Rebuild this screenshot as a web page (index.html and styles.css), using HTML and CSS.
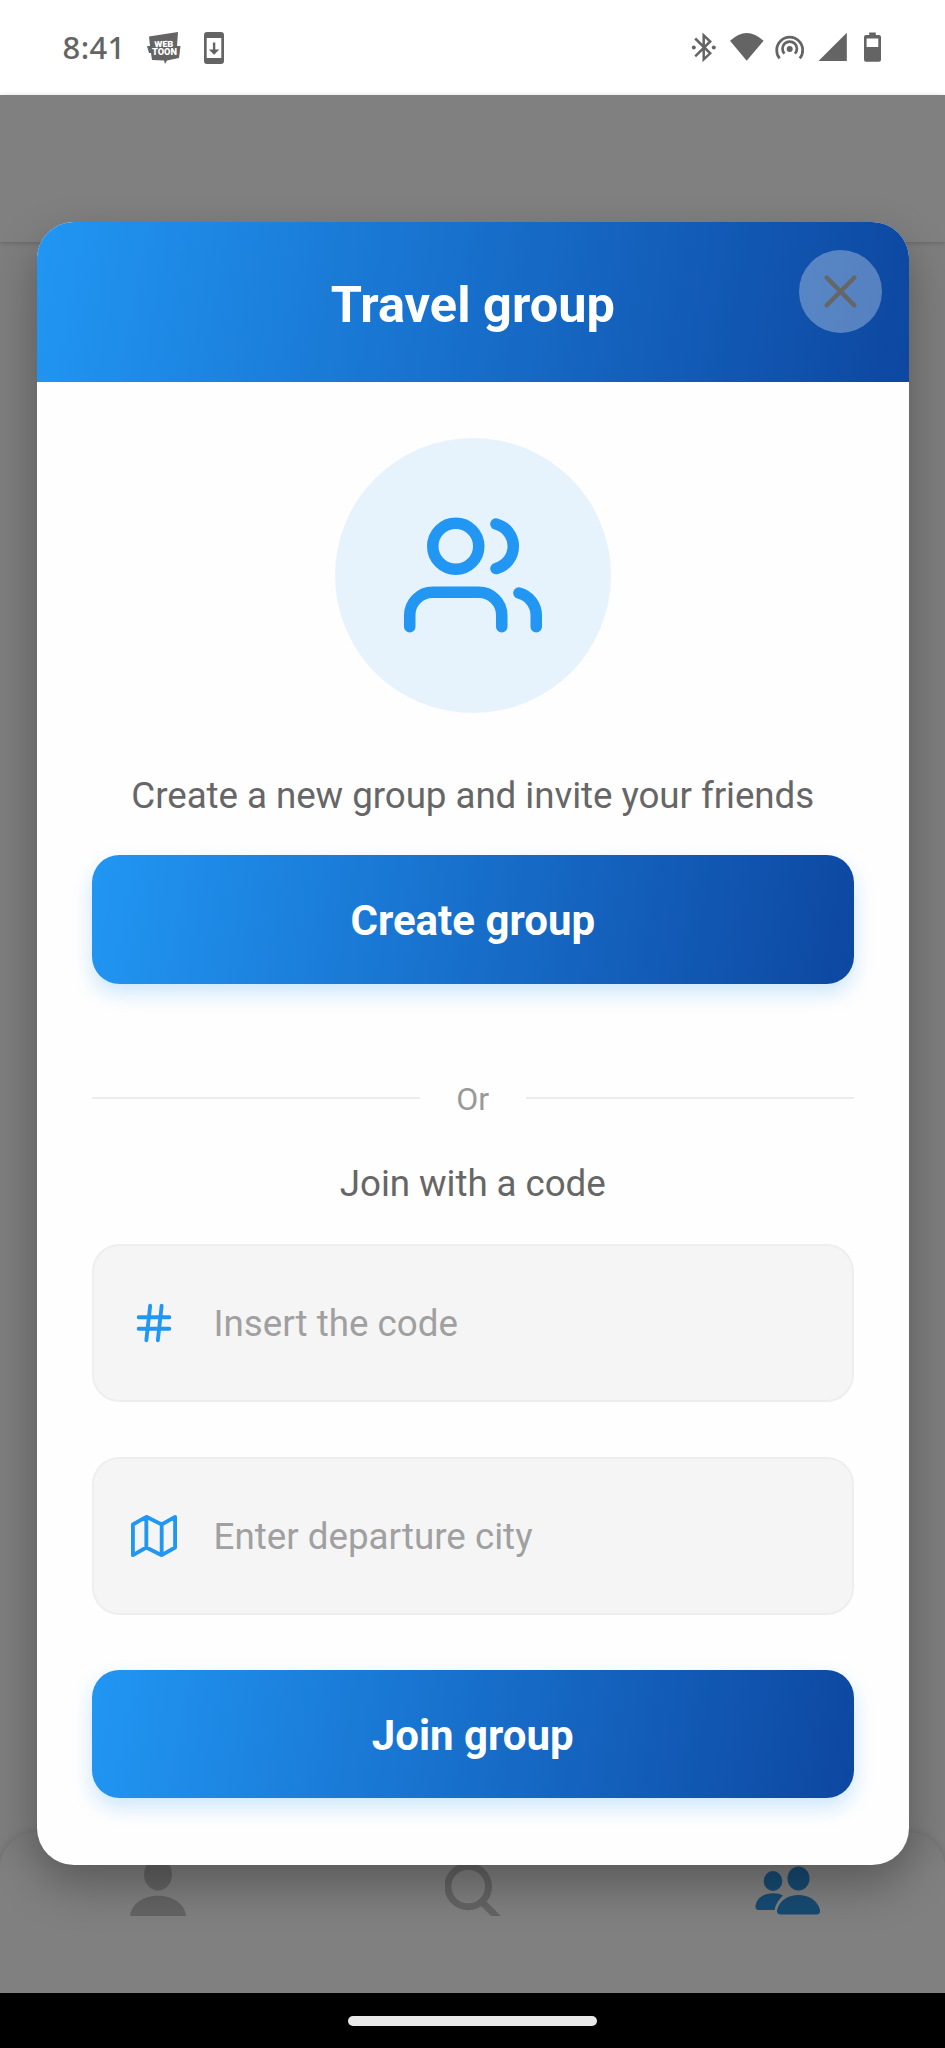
FILE: index.html
```html
<!DOCTYPE html>
<html lang="en">
<head>
<meta charset="utf-8">
<title>Travel group</title>
<link rel="stylesheet" href="styles.css">
</head>
<body>
<div class="phone">
  <header class="status">
    <div class="status-left">
      <span class="clock">8:41</span>
      <svg class="ic-webtoon" width="34" height="33" viewBox="0 0 34 33">
        <path fill="#646464" d="M2 4.500L31 0L30 14H33.500L32 26L20 28.500L18 32L17 28.500L5 28L4 21H2L0 14H3Z"/>
        <text x="17" y="15" class="toon" text-anchor="middle" textLength="19" lengthAdjust="spacingAndGlyphs" transform="rotate(-2 17 15)">WEB</text>
        <text x="17.500" y="23" class="toon" text-anchor="middle" textLength="25" lengthAdjust="spacingAndGlyphs">TOON</text>
      </svg>
      <svg class="ic-update" width="20" height="32" viewBox="0 0 20 32">
        <path fill="#646464" fill-rule="evenodd" d="M3 0H17Q20 0 20 3V29Q20 32 17 32H3Q0 32 0 29V3Q0 0 3 0ZM2.700 6V26H17.300V6Z"/>
        <path fill="#646464" d="M8.900 10.500H11.300V17.500H15.300L10.100 22.800L4.900 17.500H8.900Z"/>
      </svg>
    </div>
    <svg class="status-right" width="192" height="32" viewBox="0 0 192 32">
      <g fill="none" stroke="#646464" stroke-width="2.500">
        <path d="M4.200 6.500L19.200 21.300L12.700 27.400V3.400L19.200 9.500L4.200 24.300"/>
        <path d="M88.600 26.400A13 13 0 1 1 108.800 26.400" stroke-width="2.700"/>
        <path d="M93.400 21.600A7.200 7.200 0 1 1 104 21.600" stroke-width="2.700"/>
      </g>
      <g fill="#646464">
        <circle cx="2.800" cy="15.600" r="2"/><circle cx="22.800" cy="15.600" r="2"/>
        <path d="M39 8.800Q55.700-7 72.600 8.800L55.700 28.700Z"/>
        <circle cx="98.700" cy="17" r="3"/>
        <path d="M155.800.8V29H127.500Z"/>
        <path fill-rule="evenodd" d="M178.200.5H184.800V3H187.800Q190 3 190 5V27.700Q190 29.700 188 29.700H175Q173 29.700 173 27.700V5Q173 3 175 3H178.200ZM175.600 6.500V15H187.300V6.500Z"/>
      </g>
    </svg>
  </header>
  <main class="backdrop">
    <div class="app-bar"></div>
    <div class="app-body"></div>
    <nav class="tabs">
      <div class="tab-row">
      <svg width="56" height="60" viewBox="0 0 56 60"><g fill="#646464"><ellipse cx="28" cy="18.500" rx="14" ry="16"/><path d="M0 60C3 33 53 33 56 60Z"/></g></svg>
      <svg width="56" height="60" viewBox="0 0 56 60"><path d="M37.500 46.500L54 63M43.500 30.500A20.300 20.300 0 1 1 2.900 30.500A20.300 20.300 0 1 1 43.500 30.500" fill="none" stroke="#646464" stroke-width="7"/></svg>
      <svg width="66" height="60" viewBox="0 0 66 60"><g fill="#174b73"><ellipse cx="18" cy="25" rx="9.300" ry="10"/><ellipse cx="43.500" cy="22.500" rx="11" ry="12"/><path d="M3 54Q0 53.500.5 50C3 36 20 35.500 28 39.500Q21.500 45 19.500 54Z"/><path d="M25 58.500Q21.500 58 22 54C27 34 60 34 65 54Q65.500 58 62 58.500Z"/></g></svg>
      </div>
    </nav>
    <section class="modal">
      <div class="modal-head">
        <h1>Travel group</h1>
        <button class="close" aria-label="Close"><svg width="55" height="55" viewBox="0 0 24 24"><path d="M18 6L6 18M6 6l12 12"/></svg></button>
      </div>
      <div class="modal-body">
        <div class="hero"><svg width="138" height="138" viewBox="0 0 24 24"><path d="M17 21v-2a4 4 0 0 0-4-4H5a4 4 0 0 0-4 4v2"/><circle cx="9" cy="7" r="4"/><path d="M23 21v-2a4 4 0 0 0-3-3.870M16 3.130a4 4 0 0 1 0 7.750"/></svg></div>
        <p class="lead">Create a new group and invite your friends</p>
        <button class="action">Create group</button>
        <div class="divider"><span>Or</span></div>
        <p class="join">Join with a code</p>
        <label class="field"><svg width="46" height="46" viewBox="0 0 24 24"><path d="M4 9h16M4 15h16M10 3L8 21M16 3l-2 18"/></svg><span>Insert the code</span></label>
        <label class="field"><svg width="46" height="46" viewBox="0 0 24 24"><path d="M1 6v16l7-4 8 4 7-4V2l-7 4-8-4-7 4zM8 2v16M16 6v16"/></svg><span>Enter departure city</span></label>
        <button class="action last">Join group</button>
      </div>
    </section>
  </main>
  <footer class="gesture"><div class="pill"></div></footer>
</div>
</body>
</html>
```
FILE: styles.css
```css
* { box-sizing: border-box; }
body { margin: 0; font-family: Roboto, sans-serif; }
svg { display: block; flex: none; }
h1, p { margin: 0; }
button { border: 0; padding: 0; font-family: inherit; }
.phone { width: 945px; height: 2048px; display: flex; flex-direction: column; overflow: hidden; background: #fff; }
.status { height: 94.500px; flex: none; display: flex; justify-content: space-between; padding: 32px 62px 0 62.500px; }
.status-left { display: flex; }
.clock { width: 84.500px; font: 500 31px/31px "Noto Sans", sans-serif; color: #646464; letter-spacing: .4px; }
.toon { font: 900 8.500px Roboto, sans-serif; fill: #fff; }
.ic-update { margin-left: 23px; }
.status-right { margin-left: auto; }
.backdrop { position: relative; flex: 1; display: flex; flex-direction: column; background: #7e7e7e; }
.app-bar { height: 147px; flex: none; background: #808080; box-shadow: 0 1px 5px rgba(0,0,0,.2); }
.app-body { flex: 1; }
.tabs { height: 161px; background: linear-gradient(#7a7a7a, #808080 40px); border-radius: 37px 37px 0 0; box-shadow: 0 0 8px rgba(0,0,0,.15); }
.tab-row { padding: 24px 0 0; display: grid; grid-template-columns: repeat(3, 1fr); justify-items: center; }
.modal { position: absolute; left: 37px; top: 127.500px; width: 871.500px; height: 1642.500px; border-radius: 37px; background: #fefefe; overflow: hidden; box-shadow: 0 20px 46px rgba(0,0,0,.3); }
.modal-head { position: relative; height: 160px; display: flex; align-items: center; justify-content: center; background: linear-gradient(100.400deg, #2196f3, #0d47a1); }
.modal-head h1 { color: #fff; font-size: 50.500px; line-height: 60px; font-weight: 700; padding-top: 6px; }
.close { position: absolute; right: 27px; top: 27.500px; width: 83px; height: 83px; border-radius: 50%; background: rgba(255,255,255,.3); display: grid; place-items: center; }
.close svg { stroke: #666; stroke-width: 2; stroke-linecap: round; }
.modal-body { padding: 55.500px 55px 0; display: flex; flex-direction: column; }
.hero { align-self: center; width: 275.500px; height: 275.500px; border-radius: 50%; background: #e6f3fd; display: grid; place-items: center; }
.hero svg, .field svg { fill: none; stroke: #2196f3; stroke-width: 2; stroke-linecap: round; stroke-linejoin: round; }
.lead, .join { font-size: 36.750px; line-height: 44px; text-align: center; color: #666; white-space: nowrap; letter-spacing: -.07px; }
.lead { margin-top: 61px; }
.action { height: 128.500px; margin-top: 37px; border-radius: 27.500px; background: linear-gradient(99.600deg, #2196f3, #0d47a1); color: #fff; font-size: 42px; font-weight: 700; line-height: 48px; padding-top: 4px; box-shadow: 0 9px 20px rgba(33,150,243,.23); }
.divider { margin-top: 92px; height: 44px; display: flex; align-items: center; gap: 36.500px; font-size: 32px; color: #999; }
.divider span { padding-top: 2px; }
.divider::before, .divider::after { content: ""; flex: 1; height: 2px; background: #ececec; }
.join { margin-top: 42px; }
.field { height: 158px; margin-top: 38px; display: flex; align-items: center; padding-left: 36.500px; border: 2px solid #eee; border-radius: 27.500px; background: #f5f5f5; font-size: 36.750px; color: #a0a0a0; }
.field + .field { margin-top: 55px; }
.field span { margin-left: 37px; padding-top: 1px; }
.last { margin-top: 55px; }
.gesture { height: 55.500px; flex: none; background: #000; padding-top: 23px; }
.pill { width: 249px; height: 10px; margin: 0 auto; border-radius: 5px; background: #e9e9e9; }
```
